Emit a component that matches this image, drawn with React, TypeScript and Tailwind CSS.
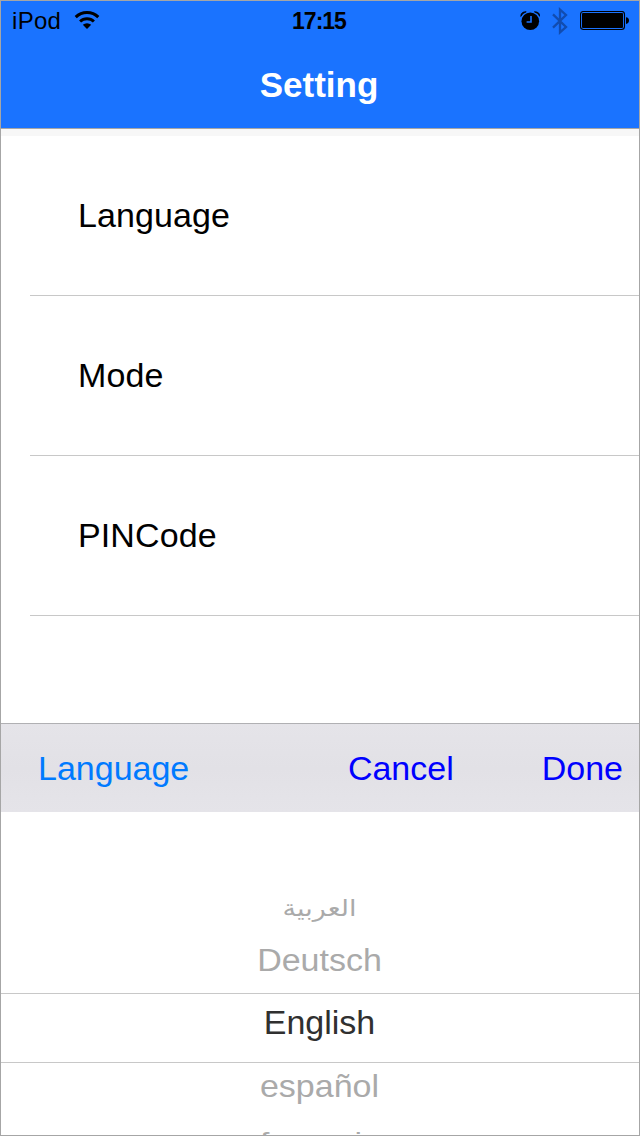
import React from 'react';

interface PickerOption {
  label: string;
  className: string;
  textClassName: string;
}

const settings = ['Language', 'Mode', 'PINCode'];

const languages: PickerOption[] = [
  {
    label: 'العربية',
    className: 'h-[39px] text-[#aaaaaa]',
    textClassName: "scale-y-[0.85] font-['DejaVu_Sans',sans-serif] text-[27px]",
  },
  { label: 'Deutsch', className: 'h-[66px] text-[#aaaaaa]', textClassName: 'scale-y-[0.93]' },
  {
    label: 'English',
    className: 'h-[70px] border-y border-[#c8c8c8] pb-3 text-[#303030]',
    textClassName: '',
  },
  { label: 'español', className: 'h-[45px] text-[#aaaaaa]', textClassName: 'scale-y-[0.9]' },
  { label: 'français', className: 'h-[65px] text-[#aaaaaa]', textClassName: 'scale-y-[0.7]' },
];

const WifiIcon = () => (
  <svg className="mb-px h-5 w-7" viewBox="0 0 28 20" fill="none" stroke="black" strokeWidth="3">
    <path d="M2.7 7.1 A16 16 0 0 1 25.3 7.1" />
    <path d="M7.1 11.5 A10 10 0 0 1 20.9 11.5" />
    <path d="M14 19 L9.8 14.8 A6.2 6.2 0 0 1 18.2 14.8 Z" fill="black" stroke="none" />
  </svg>
);

const AlarmIcon = () => (
  <svg className="h-5 w-5" viewBox="0 0 20 20">
    <circle cx="10.3" cy="10.3" r="8.8" fill="black" />
    <path d="M0.8 5.4 Q0.8 0.6 6.2 0.8 Q2.4 2 0.8 5.4 Z" fill="black" stroke="black" strokeWidth="0.8" />
    <path d="M19.8 5.4 Q19.8 0.6 14.4 0.8 Q18.2 2 19.8 5.4 Z" fill="black" stroke="black" strokeWidth="0.8" />
    <path d="M11 5 V11 H6.6" fill="none" stroke="#1a73ff" strokeWidth="1.6" />
  </svg>
);

const BluetoothIcon = () => (
  <svg className="h-7 w-4" viewBox="0 0 16 28" fill="none" stroke="#114cb0" strokeWidth="2.3">
    <path d="M1 7.4 L14 20 L8 25.4 V2.6 L14 8 L1 20.6" />
  </svg>
);

const BatteryIcon = () => (
  <svg className="h-5 w-[50px]" viewBox="0 0 50 20">
    <rect x="0.5" y="0.5" width="44" height="18" rx="3" fill="none" stroke="black" strokeWidth="1.1" />
    <rect x="2" y="2" width="41" height="15" rx="1" fill="black" />
    <path d="M46 6.2 Q49 6.6 49 9.6 Q49 12.6 46 13 Z" fill="black" />
  </svg>
);

const App: React.FC = () => {
  return (
    <div className="flex h-[1136px] w-[640px] flex-col overflow-hidden border border-[#a6a6a6] bg-white font-['Liberation_Sans',Arial,sans-serif] text-[34px] leading-[38px] text-black">
      {/* Header */}
      <header className="h-[128px] shrink-0 border-b border-[#a6a6a6] bg-[#1a73ff]">
        <div className="grid h-[39px] grid-cols-3 items-center text-2xl">
          <div className="flex items-center gap-3 pl-[11px]">
            <span className="tracking-[0.3px]">iPod</span>
            <WifiIcon />
          </div>
          <span className="pt-px pr-0.5 text-center text-[23px] font-bold tracking-[-1px]">17:15</span>
          <div className="flex items-center justify-end pr-[9px]">
            <AlarmIcon />
            <div className="ml-3 mr-3">
              <BluetoothIcon />
            </div>
            <BatteryIcon />
          </div>
        </div>
        <h1 className="flex h-[88px] items-center justify-center pr-0.5 pt-0.5 text-[35px] font-bold text-white">Setting</h1>
      </header>

      {/* Settings list */}
      <main className="h-[594px] shrink-0 border-t-[7px] border-[#f7f7f7]">
        {settings.map((item) => (
          <div
            key={item}
            className="ml-[29px] flex h-40 items-center border-b border-[#c8c8c8] pb-0.5 pl-12 tracking-[0.1px]"
          >
            {item}
          </div>
        ))}
      </main>

      {/* Picker toolbar */}
      <div className="flex h-[89px] shrink-0 items-center border-t border-[#b0b0b3] bg-linear-to-b from-[#e5e4e9] via-[#e2e1e6] to-[#e5e4e9] pl-[37px] pr-4">
        <span className="flex-1 text-[#007aff]">Language</span>
        <button className="mr-[88px] text-[#0000ff]">Cancel</button>
        <button className="text-[#0000ff]">Done</button>
      </div>

      {/* Language picker */}
      <div className="min-h-0 flex-1 overflow-hidden pt-[76px]">
        {languages.map((language) => (
          <div
            key={language.label}
            className={`flex items-center justify-center pr-px ${language.className}`}
          >
            <span className={language.textClassName}>{language.label}</span>
          </div>
        ))}
      </div>
    </div>
  );
};

export default App;
